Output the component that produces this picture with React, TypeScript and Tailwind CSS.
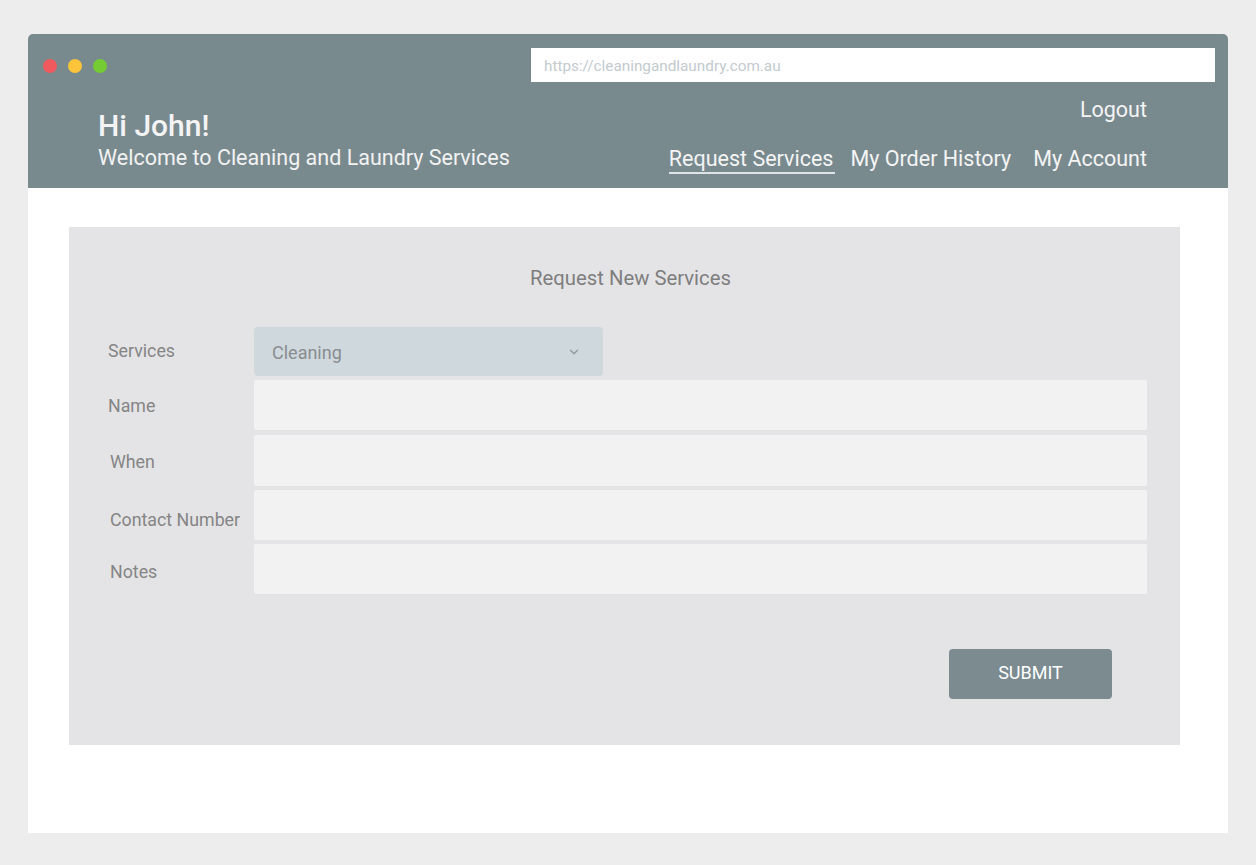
import React from "react";
import { ChevronDown } from "lucide-react";

const font = { fontFamily: "Roboto, 'Noto Sans', sans-serif" };

function Row({
  label,
  labelClass,
  children,
  rowClass,
}: {
  label: string;
  labelClass: string;
  children: React.ReactNode;
  rowClass: string;
}) {
  return (
    <div className={`flex items-stretch ${rowClass}`}>
      <div className={`w-[146px] shrink-0 flex items-center text-[17.8px] text-[#858585] whitespace-nowrap ${labelClass}`}>
        {label}
      </div>
      {children}
    </div>
  );
}

export default function App() {
  return (
    <div className="min-h-[865px] w-[1256px] bg-[#ededed] pt-[34px] px-[28px]" style={font}>
      <div className="w-[1200px] h-[799px] bg-white rounded-t-[5px] overflow-hidden flex flex-col">
        {/* Header */}
        <div className="h-[154px] bg-[#798a8f] flex flex-col shrink-0">
          <div className="flex items-center pt-[14px] h-[48px]">
            <div className="flex items-center gap-[11px] pl-[15px] pt-[1px]">
              <span className="w-[14px] h-[14px] rounded-full bg-[#f0595d]" />
              <span className="w-[14px] h-[14px] rounded-full bg-[#fcc43b]" />
              <span className="w-[14px] h-[14px] rounded-full bg-[#74cc32]" />
            </div>
            <div className="ml-auto mr-[13px] w-[684px] h-[34px] bg-white flex items-center pl-[13px] pt-[3px] text-[15.3px] text-[#c3cbcf]">
              https://cleaningandlaundry.com.au
            </div>
          </div>
          <div className="flex justify-between pl-[70px] pr-[81px]">
            <div className="flex flex-col pt-[27px]">
              <div className="text-[30px] leading-[33px] font-medium text-[#f4f4f4]">Hi John!</div>
              <div className="mt-[3px] text-[21.5px] leading-[25px] text-[#f2f2f2]">
                Welcome to Cleaning and Laundry Services
              </div>
            </div>
            <div className="flex flex-col items-end pt-[15px]">
              <div className="text-[21.5px] leading-[25px] text-[#f4f4f4]">Logout</div>
              <div className="mt-[24px] flex items-start text-[21.5px] leading-[25px] text-[#f4f4f4]">
                <div className="flex flex-col items-stretch">
                  <span>Request Services</span>
                  <span className="mt-[1px] mr-[-2px] h-[2px] bg-[#dfe5e7]" />
                </div>
                <span className="ml-[17px]">My Order History</span>
                <span className="ml-[22px]">My Account</span>
              </div>
            </div>
          </div>
        </div>

        {/* Body */}
        <div className="flex-1 pt-[39px] pl-[41px] pr-[48px]">
          <div className="h-[518px] bg-[#e4e4e6] flex flex-col pt-[37px] pl-[39px] pr-[33px]">
            <div className="text-center text-[20.3px] leading-[28px] text-[#7e7e7e] pl-[6px]">
              Request New Services
            </div>
            <div className="mt-[35px] flex flex-col">
              <Row label="Services" labelClass="" rowClass="h-[49px]">
                <div className="w-[349px] rounded-[4px] bg-[#cfd8dd] flex items-center justify-between pl-[18px] pr-[22px] text-[18px] text-[#898d90]">
                  <span className="pt-[2px]">Cleaning</span>
                  <ChevronDown size={14} strokeWidth={2.2} className="text-[#8e989c]" />
                </div>
              </Row>
              <Row label="Name" labelClass="pt-[3px]" rowClass="h-[50px] mt-[4px]">
                <div className="flex-1 rounded-[2px] bg-[#f2f2f2]" />
              </Row>
              <Row label="When" labelClass="pl-[2px] pt-[3px]" rowClass="h-[51px] mt-[5px]">
                <div className="flex-1 rounded-[2px] bg-[#f2f2f2]" />
              </Row>
              <Row label="Contact Number" labelClass="pl-[2px] pt-[10px]" rowClass="h-[50px] mt-[4px]">
                <div className="flex-1 rounded-[2px] bg-[#f2f2f2]" />
              </Row>
              <Row label="Notes" labelClass="pl-[2px] pt-[7px]" rowClass="h-[50px] mt-[4px]">
                <div className="flex-1 rounded-[2px] bg-[#f2f2f2]" />
              </Row>
            </div>
            <div className="mt-[55px] flex justify-end pr-[35px]">
              <button className="w-[163px] h-[50px] rounded-[4px] bg-[#7b8b90] text-white text-[18px] flex items-center justify-center pb-[3px]">
                SUBMIT
              </button>
            </div>
          </div>
        </div>
      </div>
    </div>
  );
}
